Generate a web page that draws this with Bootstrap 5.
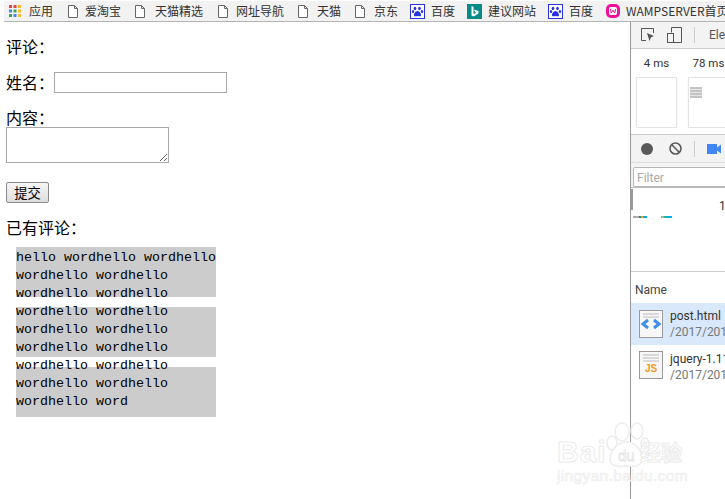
<!DOCTYPE html>
<html lang="zh">
<head>
<meta charset="utf-8">
<title>评论</title>
<link rel="stylesheet" href="https://cdn.jsdelivr.net/npm/bootstrap@5.3.0/dist/css/bootstrap.min.css">
<style>
html,body{width:725px;height:499px;overflow:hidden;background:#fff}
body{font-family:"Noto Sans CJK SC","Liberation Sans",sans-serif;font-size:16px;color:#000;position:relative}
.bm-bar{height:20px;margin:1px 0 0 4px;background:#f2f2f2;font-size:12px;line-height:20px;color:#333;white-space:nowrap;overflow:hidden;padding-left:5px}
.bm-item{flex:none;display:flex;align-items:center;gap:var(--g,5px);width:var(--w)}
.bm-item svg{flex:none}
.bar-rule{height:1px;background:#b4b4b4;margin-left:4px}
.work{height:477px}
.page-pane{width:630px;flex:none;padding:15px 6px 0}
.pane-line{height:18px;line-height:18px;margin:0}
.name-row{margin-top:17px;height:21px;line-height:20px}
.name-input{width:173px;height:21px;border:1px solid #a9a9a9;padding:1px 2px;display:block}
.msg-label{margin-top:15px;height:19px;line-height:18px}
.msg-area{display:block;width:163px;height:36px;border:1px solid #a9a9a9;padding:1px 2px;margin:0}
.send-btn{display:block;margin-top:19px;width:43px;height:21px;padding:0;border:1px solid #8a8a8a;border-radius:2px;background:linear-gradient(#f6f6f6,#dedede);font-size:13.33px;line-height:18px;color:#000}
.old-title{margin-top:15px}
.gray-box{width:200px;height:50px;background:#ccc;margin-left:10px;margin-top:10px;padding-top:2px;font-family:"Liberation Mono",monospace;font-size:13.333px;line-height:18px}
.gray-box.first{margin-top:11px}
.dev-pane{flex:1;min-width:0;border-left:1px solid #9a9a9a;font-family:Roboto,"Liberation Sans",sans-serif;font-size:12px;color:#333;overflow:hidden}
.dev-pane svg{flex:none}
.dev-tabs{height:27px;background:#f3f3f3;border-bottom:1px solid #ccc;white-space:nowrap;padding-left:10px;gap:12px;color:#555;overflow:hidden}
.sep{width:1px;height:16px;background:#ccc;flex:none}
.tab-word{margin-left:2px}
.strip{height:86px;border-bottom:1px solid #ccc;padding:0 0 0 5px;gap:11px}
.shot-col{width:41px;flex:none;text-align:center;white-space:nowrap}
.shot-col span{display:block;height:28px;line-height:28px;font-size:11.5px}
.shot{width:41px;height:51px;border:1px solid #e4e4e4;border-radius:1px;background:#fff;box-shadow:0 0 1px #ddd;padding:2px 1px}
.lines{display:block;width:12px;height:11px;margin-top:7px;background:repeating-linear-gradient(#c4c4c4 0 2px,#e6e6e6 2px 3px)}
.rec-bar{height:28px;background:#f3f3f3;border-bottom:1px solid #ddd;padding-left:10px;gap:12px}
.filter-bar{height:25px;background:#f3f3f3;border-bottom:1px solid #bbb;padding:4px 0 0 2px}
.filter-box{width:110px;height:20px;border:1px solid #b8b8b8;border-radius:2px;background:#fff;color:#a8a8a8;font-size:12px;line-height:20px;padding-left:3px;flex:none}
.overview{height:84px;border-bottom:1px solid #ccc;position:relative;white-space:nowrap}
.grip{position:absolute;left:0;top:1px;width:2px;height:21px;background:#999}
.num{position:absolute;left:88px;top:9px;color:#333}
.tick{position:absolute;top:28px;height:2px;display:flex}
.tick i{display:block;height:2px}
.name-head{height:31px;line-height:36px;padding-left:4px;color:#444}
.req{height:40px;padding-left:8px;gap:7px;white-space:nowrap}
.req.sel{background:#d9e9fb;height:42px}
.req-t{line-height:16px;font-size:12px;color:#333}
.req-t em{display:block;font-style:normal;color:#777}
.req-low .req-t{padding-top:4px}
.mark-wrap{position:absolute;left:557px;top:421px;width:150px;height:68px;color:#fff;pointer-events:none;text-align:left}
.mark-top{position:absolute;left:0;top:16px;font:bold 30px/30px "Liberation Sans",sans-serif;letter-spacing:1px;-webkit-text-stroke:1px #ececec;white-space:nowrap}
.mark-du{left:61px;top:26px;font-size:15px;line-height:18px;font-weight:400;letter-spacing:0;-webkit-text-stroke:.8px #e4e4e4}
.mark-cn{position:absolute;left:83px;top:18px;font:bold 21px/24px "Noto Sans CJK SC",sans-serif;-webkit-text-stroke:1px #ececec;white-space:nowrap}
.mark-sub{position:absolute;left:0;top:46px;font:15.5px/18px "Liberation Sans",sans-serif;-webkit-text-stroke:.7px #ececec;white-space:nowrap;letter-spacing:.35px}
.mark-paw{position:absolute;left:46px;top:0}
.mark-paw g{fill:#fff;stroke:#ececec;stroke-width:1.5}
</style>
</head>
<body>
<div class="bm-bar d-flex align-items-center">
  <div class="bm-item" style="--w:59px;--g:8px"><svg width="12" height="12" viewBox="0 0 12 12"><g><rect width="3" height="3" fill="#e8453c"/><rect x="4.5" width="3" height="3" fill="#e8453c"/><rect x="9" width="3" height="3" fill="#f9bb2d"/><rect y="4.5" width="3" height="3" fill="#4285f4"/><rect x="4.5" y="4.5" width="3" height="3" fill="#34a853"/><rect x="9" y="4.5" width="3" height="3" fill="#f9bb2d"/><rect y="9" width="3" height="3" fill="#34a853"/><rect x="4.5" y="9" width="3" height="3" fill="#4285f4"/><rect x="9" y="9" width="3" height="3" fill="#f9bb2d"/></g></svg>应用</div>
  <div class="bm-item" style="--w:67px;--g:7px"><svg width="10" height="13" viewBox="0 0 10 13"><path d="M.5.5h6l3 3v9H.5zM6.500.5v3h3" fill="#fff" stroke="#666"/></svg>爱淘宝</div>
  <div class="bm-item" style="--w:83px;--g:10px"><svg width="10" height="13" viewBox="0 0 10 13"><path d="M.5.5h6l3 3v9H.5zM6.500.5v3h3" fill="#fff" stroke="#666"/></svg>天猫精选</div>
  <div class="bm-item" style="--w:80px;--g:8px"><svg width="10" height="13" viewBox="0 0 10 13"><path d="M.5.5h6l3 3v9H.5zM6.500.5v3h3" fill="#fff" stroke="#666"/></svg>网址导航</div>
  <div class="bm-item" style="--w:57px;--g:9px"><svg width="10" height="13" viewBox="0 0 10 13"><path d="M.5.5h6l3 3v9H.5zM6.500.5v3h3" fill="#fff" stroke="#666"/></svg>天猫</div>
  <div class="bm-item" style="--w:55px;--g:9px"><svg width="10" height="13" viewBox="0 0 10 13"><path d="M.5.5h6l3 3v9H.5zM6.500.5v3h3" fill="#fff" stroke="#666"/></svg>京东</div>
  <div class="bm-item" style="--w:57px;--g:6px"><svg width="15" height="15" viewBox="0 0 15 15"><rect x=".5" y=".5" width="14" height="14" fill="#fff" stroke="#2932e1"/><g fill="#2932e1"><ellipse cx="5" cy="4.500" rx="1.300" ry="1.800"/><ellipse cx="9.500" cy="4.500" rx="1.300" ry="1.800"/><ellipse cx="3" cy="7.500" rx="1.200" ry="1.600"/><ellipse cx="12" cy="7.500" rx="1.200" ry="1.600"/><path d="M7.500 7c2 0 4 3 3.500 4.500S8.500 12 7.500 12 4.500 13 4 11.500 5.500 7 7.500 7z"/></g></svg>百度</div>
  <div class="bm-item" style="--w:81px;--g:6px"><svg width="15" height="15" viewBox="0 0 15 15"><rect width="15" height="15" fill="#0a8a84"/><path d="M4.500 2l2 .7v7.500l3-1.700-1.500-.8-1-2.200 4.500 1.500v2.500l-5 3-2-1z" fill="#fff"/></svg>建议网站</div>
  <div class="bm-item" style="--w:58px;--g:6px"><svg width="15" height="15" viewBox="0 0 15 15"><rect x=".5" y=".5" width="14" height="14" fill="#fff" stroke="#2932e1"/><g fill="#2932e1"><ellipse cx="5" cy="4.500" rx="1.300" ry="1.800"/><ellipse cx="9.500" cy="4.500" rx="1.300" ry="1.800"/><ellipse cx="3" cy="7.500" rx="1.200" ry="1.600"/><ellipse cx="12" cy="7.500" rx="1.200" ry="1.600"/><path d="M7.500 7c2 0 4 3 3.500 4.500S8.500 12 7.500 12 4.500 13 4 11.500 5.500 7 7.500 7z"/></g></svg>百度</div>
  <div class="bm-item" style="--w:130px;--g:6px"><svg width="14" height="14" viewBox="0 0 14 14"><rect width="14" height="14" rx="5" fill="#f0109a"/><rect x="3" y="3" width="8" height="8" rx="2" fill="#fff"/><path d="M4.300 5l1 4 1.700-3 1.700 3 1-4" fill="none" stroke="#f0109a"/></svg>WAMPSERVER首页</div>
</div>
<div class="bar-rule"></div>
<div class="work d-flex">
  <main class="page-pane">
    <p class="pane-line">评论：</p>
    <div class="name-row d-flex"><span>姓名：</span><input class="name-input" type="text" aria-label="姓名"></div>
    <p class="pane-line msg-label">内容：</p>
    <textarea class="msg-area" aria-label="内容"></textarea>
    <button class="send-btn" type="button">提交</button>
    <p class="pane-line old-title">已有评论：</p>
    <div class="gray-box first">hello wordhello wordhello wordhello wordhello wordhello wordhello wordhello wordhello wordhello wordhello wordhello wordhello wordhello wordhello wordhello wordhello wordhello word</div>
    <div class="gray-box"></div>
    <div class="gray-box"></div>
  </main>
  <aside class="dev-pane">
    <div class="dev-tabs d-flex align-items-center">
      <svg width="14" height="14" viewBox="0 0 14 14"><path d="M5 12.500H.5V.5h12V5" fill="none" stroke="#555"/><path d="M6 5l7 3-3 1.200L8.500 13z" fill="#555"/></svg>
      <svg width="15" height="16" viewBox="0 0 15 16"><path d="M4.500 5.500V.5h10v15h-8" fill="none" stroke="#555"/><rect x=".5" y="6.500" width="6" height="9" fill="#f3f3f3" stroke="#555"/></svg>
      <span class="sep"></span><span class="tab-word">Elements</span>
    </div>
    <div class="strip d-flex">
      <div class="shot-col"><span>4 ms</span><div class="shot"></div></div>
      <div class="shot-col"><span>78 ms</span><div class="shot"><b class="lines"></b></div></div>
    </div>
    <div class="rec-bar d-flex align-items-center">
      <svg width="12" height="12" viewBox="0 0 12 12"><circle cx="6" cy="6" r="6" fill="#5a5a5a"/></svg>
      <svg width="13" height="13" viewBox="0 0 13 13" class="ms-1"><circle cx="6.500" cy="6.500" r="5.500" fill="none" stroke="#5a5a5a" stroke-width="1.600"/><path d="M2.800 2.800l7.400 7.400" stroke="#5a5a5a" stroke-width="1.600"/></svg>
      <span class="sep"></span>
      <svg width="14" height="10" viewBox="0 0 14 10"><path d="M0 0h10v3.500L14 .5v9l-4-3V10H0z" fill="#4285f4"/></svg>
    </div>
    <div class="filter-bar d-flex"><div class="filter-box">Filter</div></div>
    <div class="overview">
      <span class="grip"></span><span class="num">1</span>
      <div class="tick" style="left:2px"><i style="width:6px;background:#aaa"></i><i style="width:2px;background:#2a8a6a"></i><i style="width:2px;background:#f0a030"></i><i style="width:4px;background:#00b0e0"></i></div>
      <div class="tick" style="left:30px"><i style="width:3px;background:#aaa"></i><i style="width:2px;background:#3cb371"></i><i style="width:6px;background:#00b0e0"></i></div>
    </div>
    <div class="name-head">Name</div>
    <div class="req sel d-flex align-items-center">
      <svg width="24" height="28" viewBox="0 0 24 28"><rect x=".5" y=".5" width="23" height="27" fill="#f7f7f7" stroke="#999"/><path d="M4 4h16M4 7h16" stroke="#bbb"/><path d="M9 10l-5 4 5 4M15 10l5 4-5 4" fill="none" stroke="#3d8fe6" stroke-width="3"/></svg>
      <div class="req-t">post.html<em>/2017/2017</em></div>
    </div>
    <div class="req req-low d-flex align-items-center">
      <svg width="24" height="28" viewBox="0 0 24 28"><rect x=".5" y=".5" width="23" height="27" fill="#f7f7f7" stroke="#999"/><path d="M4 4h16M4 7h16M4 10h16" stroke="#bbb"/><text x="12" y="21" text-anchor="middle" font-family="Liberation Sans,sans-serif" font-weight="700" font-size="10" fill="#f29a1f">JS</text></svg>
      <div class="req-t">jquery-1.11<em>/2017/2017</em></div>
    </div>
  </aside>
</div>
<div class="mark-wrap">
  <svg class="mark-paw" width="64" height="50" viewBox="0 0 64 50"><g><ellipse cx="19" cy="11" rx="7" ry="9"/><ellipse cx="34" cy="10" rx="6" ry="8"/><ellipse cx="9" cy="22" rx="5" ry="7"/><ellipse cx="42" cy="23" rx="4" ry="6"/><path d="M24 21c9 0 16 10 15 18-1 7-8 7-15 6-8 1-15 1-17-5-1-9 7-19 17-19z"/></g></svg>
  <span class="mark-top">Bai</span>
  <span class="mark-top mark-du">du</span>
  <span class="mark-cn">经验</span>
  <span class="mark-sub">jingyan.baidu.com</span>
</div>
</body>
</html>
